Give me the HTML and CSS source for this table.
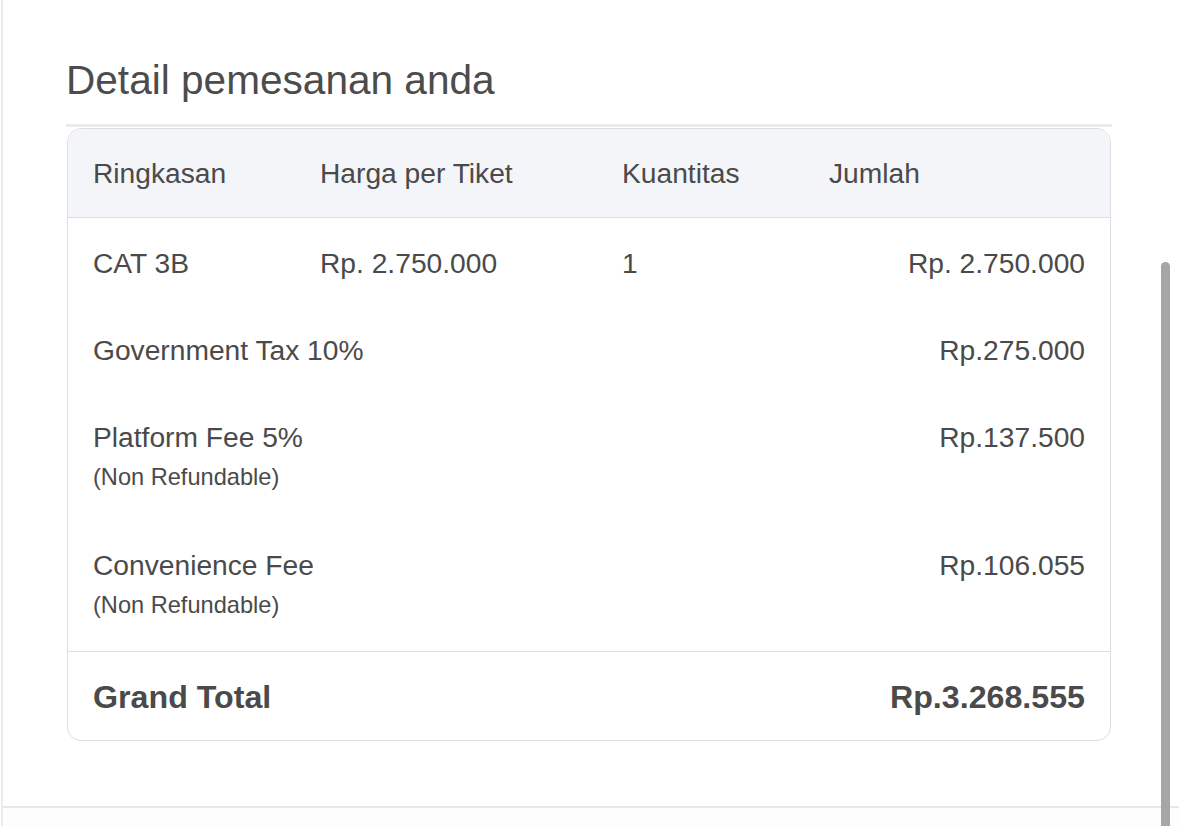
FILE: index.html
```html
<!DOCTYPE html>
<html lang="id">
<head>
<meta charset="utf-8">
<title>Detail pemesanan anda</title>
<link rel="stylesheet" href="styles.css">
</head>
<body>
<div class="page">
  <main class="content">
    <h2 class="title">Detail pemesanan anda</h2>
    <div class="rule"></div>
    <div class="card">
      <table class="summary">
        <colgroup>
          <col class="c1"><col class="c2"><col class="c3"><col class="c4">
        </colgroup>
        <thead>
          <tr>
            <th>Ringkasan</th>
            <th>Harga per Tiket</th>
            <th>Kuantitas</th>
            <th>Jumlah</th>
          </tr>
        </thead>
        <tbody>
          <tr class="first">
            <td>CAT 3B</td>
            <td>Rp. 2.750.000</td>
            <td>1</td>
            <td class="amt">Rp. 2.750.000</td>
          </tr>
          <tr>
            <td colspan="3"><div class="label">Government Tax 10%</div></td>
            <td class="amt">Rp.275.000</td>
          </tr>
          <tr class="third">
            <td colspan="3"><div class="label">Platform Fee 5%</div><div class="sub">(Non Refundable)</div></td>
            <td class="amt">Rp.137.500</td>
          </tr>
          <tr class="last">
            <td colspan="3"><div class="label">Convenience Fee</div><div class="sub">(Non Refundable)</div></td>
            <td class="amt">Rp.106.055</td>
          </tr>
          <tr class="total">
            <td colspan="3">Grand Total</td>
            <td class="amt">Rp.3.268.555</td>
          </tr>
        </tbody>
      </table>
    </div>
  </main>
  <footer class="footer"></footer>
  <div class="thumb"></div>
</div>
</body>
</html>
```

FILE: styles.css
```css
html, body {
  margin: 0;
  padding: 0;
  background: #ffffff;
}
body {
  width: 1179px;
  height: 826px;
  overflow: hidden;
  font-family: "Liberation Sans", Arial, sans-serif;
  color: #4a4a4a;
}
.page {
  position: relative;
  height: 826px;
  margin-left: 1px;
  border-left: 2px solid #ececec;
  display: flex;
  flex-direction: column;
}
.content {
  padding: 57px 0 0 63px;
  width: 1046px;
  height: 749px;
}
.title {
  margin: 0;
  font-size: 40.6px;
  line-height: 46px;
  font-weight: 400;
  color: #4c4c4c;
}
.rule {
  margin-top: 21px;
  height: 3px;
  background: #ebebeb;
}
.card {
  margin: 1px 1px 0 1px;
  border: 1px solid #dcdee3;
  border-radius: 14px;
  overflow: hidden;
}
.summary {
  width: 100%;
  border-collapse: collapse;
  table-layout: fixed;
  font-size: 28.2px;
}
.c1 { width: 227px; }
.c2 { width: 302px; }
.c3 { width: 207px; }
.c4 { width: auto; }
.summary th {
  background: #f4f5f9;
  font-weight: 400;
  text-align: left;
  padding: 28px 25px;
  line-height: 32px;
  border-bottom: 1px solid #dcdee3;
  white-space: nowrap;
}
.summary td {
  padding: 27px 25px;
  line-height: 33px;
  vertical-align: top;
  white-space: nowrap;
}
.summary tr.first td {
  padding-top: 29px;
}
.summary tr.third td {
  padding-bottom: 28px;
}
.summary tr.last td {
  padding-bottom: 29px;
}
.summary td.amt {
  text-align: right;
}
.sub {
  margin-top: 7px;
  font-size: 23.6px;
  line-height: 33px;
}
.summary tr.total td {
  border-top: 1.5px solid #dcdee3;
  font-weight: 700;
  font-size: 32.2px;
  line-height: 36px;
  padding-top: 27px;
  padding-bottom: 25px;
}
.footer {
  margin-top: auto;
  height: 18px;
  border-top: 2px solid #e8e8e8;
  background: #fdfdfd;
}
.thumb {
  position: absolute;
  left: 1158px;
  top: 262px;
  width: 9px;
  height: 564px;
  background: #a6a6a6;
  border-radius: 5px 5px 0 0;
}
```
